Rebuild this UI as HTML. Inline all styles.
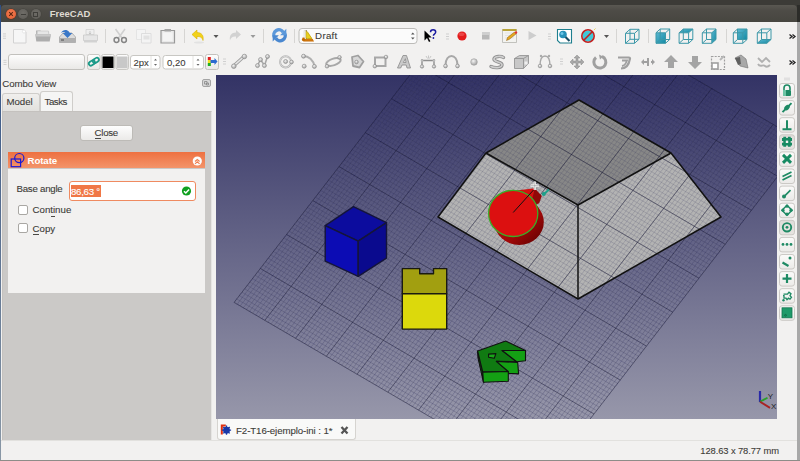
<!DOCTYPE html>
<html><head><meta charset="utf-8">
<style>
*{box-sizing:border-box}
html,body{margin:0;padding:0}
body{width:800px;height:461px;overflow:hidden;position:relative;background:#3c3b37;font-family:"Liberation Sans",sans-serif;font-size:10px;color:#3c3b37;line-height:1;-webkit-text-stroke:0.1px currentColor}
.a{position:absolute}
svg{overflow:hidden}
</style></head><body>
<div class="a" style="left:0;top:5px;width:1px;height:456px;background:linear-gradient(#2d4f86,#5a7090 50%,#8a98a6)"></div>
<div class="a" style="left:797px;top:5px;width:3px;height:17px;background:#2c2c29"></div><div class="a" style="left:797px;top:22px;width:3px;height:439px;background:#a8a8a8"></div>
<div class="a" style="left:1px;top:5px;width:796px;height:18px;background:linear-gradient(#5a5852,#4e4c47 30%,#46453f);border-radius:4px 4px 0 0">
  <div class="a" style="left:4.7px;top:4px;width:10px;height:10px;border-radius:50%;background:radial-gradient(circle at 50% 40%,#f47e55,#e05a2c);box-shadow:0 0 0 .5px #5a3020"></div>
  <svg class="a" style="left:4.7px;top:4px" width="10" height="10" viewBox="0 0 10 10"><path d="M3.2 3.2l3.6 3.6M6.8 3.2l-3.6 3.6" stroke="#5a2510" stroke-width="1.1"/></svg>
  <div class="a" style="left:17px;top:4px;width:10px;height:10px;border-radius:50%;background:radial-gradient(circle at 50% 40%,#6f6d68,#5b5954);box-shadow:0 0 0 .6px #44433f"></div>
  <div class="a" style="left:19.5px;top:8.5px;width:5px;height:1.2px;background:#3f3e3a"></div>
  <div class="a" style="left:29.5px;top:4px;width:10px;height:10px;border-radius:50%;background:radial-gradient(circle at 50% 40%,#6f6d68,#5b5954);box-shadow:0 0 0 .6px #44433f"></div>
  <div class="a" style="left:32px;top:6.5px;width:5px;height:5px;border:1px solid #3f3e3a"></div>
  <div class="a" style="left:48.75px;top:4.46px;font-weight:bold;font-size:9.5px;color:#dfdbd2;-webkit-text-stroke:0">FreeCAD</div>
</div>
<div class="a" style="left:1px;top:22px;width:796px;height:438px;background:#f2f1f0"></div>
<!-- toolbar 1 -->
<svg class="a" style="left:0;top:22px" width="800" height="27" viewBox="0 22 800 27">
<g stroke="#c8c8c8" stroke-width=".8"><path d="M3 33.9h3M3 36.1h3M3 38.3h3"/></g>
<g stroke="#d6d5d3" stroke-width="1"><path d="M105.5 29v14M184.5 29v14M263.5 29v14M294.5 29v14M616.5 29v14M648.5 29v14M726.5 29v14"/></g>
<!-- new -->
<path d="M13.5 29.5h10l2.5 2.5v11h-12.5z" fill="#f6f6f6" stroke="#d2d2d2"/>
<circle cx="24" cy="31.5" r="1.6" fill="#fff" stroke="#d8d8d8" stroke-width=".6"/>
<!-- open -->
<path d="M36 30.5h4.5l1 1.2h7.5v3h-13z" fill="#b4b4b4"/>
<path d="M37.5 31h11l.5 4h-12z" fill="#e6e6e6" stroke="#c4c4c4" stroke-width=".6"/>
<path d="M35.3 34.2h15.7l-1.3 7.3h-13.4z" fill="#adadad"/>
<path d="M35.3 34.2h15.7l-.4 2.2h-15z" fill="#c9c9c9"/>
<!-- save -->
<path d="M59.5 37l3.5-4h9l3.5 4v5.5h-16z" fill="#dcdcdc" stroke="#a4a4a4" stroke-width=".8"/>
<path d="M59.5 38h16v4.5h-16z" fill="#b0b0b0"/>
<path d="M61 40h3" stroke="#444" stroke-width=".9"/>
<path d="M61 33c1.5-3.5 6-4 8-1.2l.8 1.2h2.5l-4.8 5-4.8-5h2.6c-.8-1.2-2.8-1.2-4.3 0z" fill="#3a78c8"/>
<!-- print -->
<path d="M86 29.5h8v5h-8z" fill="#efefef" stroke="#cfcfcf" stroke-width=".7"/>
<path d="M83.5 35h14v5.5h-14z" fill="#e6e6e6" stroke="#c6c6c6" stroke-width=".7"/>
<path d="M84 40.5h13v2h-13z" fill="#d2d2d2"/>
<path d="M90 31v3M88.8 33l1.2 1 1.2-1" stroke="#b9b9b9" stroke-width=".7" fill="none"/>
<!-- cut -->
<path d="M115.5 29l6.5 9M125 29l-6.5 9" stroke="#d0d0d0" stroke-width="1.6"/>
<circle cx="116.5" cy="40" r="2.4" fill="none" stroke="#858585" stroke-width="1.5"/>
<circle cx="124" cy="40" r="2.4" fill="none" stroke="#858585" stroke-width="1.5"/>
<!-- copy -->
<path d="M136.5 29.5h9v10h-9z" fill="#f4f4f4" stroke="#e0e0e0" stroke-width=".8"/>
<path d="M141.5 33.5h9.5v9.5h-9.5z" fill="#f4f4f4" stroke="#d8d8d8" stroke-width=".8"/>
<path d="M143.5 35.5h6v4h-6z" fill="#e2e2e2"/>
<!-- paste -->
<path d="M161 30.5h13.5v12.5h-13.5z" fill="#e9e9e9" stroke="#999" stroke-width="1.2"/>
<path d="M164.5 29h6.5v2.5h-6.5z" fill="#a5a5a5"/>
<path d="M163 32.5h9.5v8.5h-9.5z" fill="#f4f4f4"/>
<!-- undo -->
<path d="M197 30l-5 4.5 5 4.5v-2.5c3 0 5 .5 6 4 1-5-1.5-8-6-8z" fill="#f2d21a" stroke="#d9b000" stroke-width=".6"/>
<ellipse cx="199" cy="42.5" rx="5" ry="1" fill="#e2e2e2"/>
<path d="M213.5 35h5l-2.5 3z" fill="#555"/>
<!-- redo -->
<path d="M236 30l5 4.5-5 4.5v-2.5c-3 0-5 .5-6 4-1-5 1.5-8 6-8z" fill="#d2d2d2"/>
<path d="M250.5 35h5l-2.5 3z" fill="#9a9a9a"/>
<!-- refresh -->
<path d="M274.5 37.5a5 5 0 0 1 8.8-5.2" fill="none" stroke="#5b98da" stroke-width="3.4"/>
<path d="M284.5 33a5 5 0 0 1-8.8 5.2" fill="none" stroke="#4a88d0" stroke-width="3.4"/>
<path d="M286.3 28.8v6.4h-6.2z" fill="#5b98da"/>
<path d="M272.7 41.6v-6.4h6.2z" fill="#4a88d0"/>
<!-- combobox -->
<rect x="299" y="28.5" width="118" height="15" rx="3" fill="#fbfbfb" stroke="#bdbcb9"/>
<path d="M303 41.5h11l-1-2h-8z" fill="#c96a00"/>
<path d="M305.5 31l1.5-1v10h-1.5z" fill="#555"/>
<path d="M307.5 31l5 8.5h-5z" fill="#e8c21a"/>
<path d="M411 34.5l1.8-2 1.8 2zM411 37.5l1.8 2 1.8-2z" fill="#555"/>
<!-- whats this -->
<path d="M424.5 30.5v10l2.5-2.5 2 4 1.4-.7-2-3.8h3.3z" fill="#000"/>
<path d="M430.5 32.2c0-1.6 1.2-2.4 2.6-2.4 1.5 0 2.6.9 2.6 2.3 0 2-2.3 2-2.3 3.6" fill="none" stroke="#1a1aa0" stroke-width="1.5"/>
<circle cx="433.4" cy="38" r=".9" fill="#1a1aa0"/>
<g stroke="#cfcfcf"><path d="M446 34h3M446 36.5h3M446 39h3"/></g>
<circle cx="462" cy="36" r="4.6" fill="#e31c1c"/>
<ellipse cx="461.5" cy="34.3" rx="3" ry="1.8" fill="#f26060" opacity=".6"/>
<!-- stop -->
<rect x="482" y="32" width="7.5" height="7.5" fill="#b8b8b8"/>
<rect x="482" y="32" width="7.5" height="3" fill="#cfcfcf"/>
<!-- macro edit -->
<path d="M502.5 29.5h14v13h-14z" fill="#f3f3f0" stroke="#b5b5b0" stroke-width=".8"/>
<path d="M502.5 29h14v2h-14z" fill="#b8a43a"/>
<path d="M505 33h9M505 35.5h9M505 38h9" stroke="#dcdcdc" stroke-width=".6"/>
<path d="M506.5 40.5l1-3 7-5.5 1.7 1.8-6.8 5.5z" fill="#e4a820" stroke="#8a5a10" stroke-width=".5"/>
<circle cx="516" cy="32.5" r="1.2" fill="#e23030"/>
<path d="M528.5 31v9l8-4.5z" fill="#cdcdcd"/>
<g stroke="#cfcfcf"><path d="M548 34h3M548 36.5h3M548 39h3"/></g>
<!-- zoom doc -->
<path d="M557.5 29.5h14v13.5h-11.5l-2.5-2.5z" fill="#fff" stroke="#1e7f8e" stroke-width="1.1"/>
<circle cx="563" cy="34.5" r="3.8" fill="#2791b8"/>
<circle cx="562" cy="33.5" r="1.5" fill="#6cc5e8"/>
<path d="M565.5 37l4 4" stroke="#1a4f66" stroke-width="2.2"/>
<!-- no entry -->
<circle cx="588" cy="36" r="5.6" fill="#40c8d8"/>
<circle cx="588" cy="36" r="6.2" fill="none" stroke="#c02020" stroke-width="1.6"/>
<path d="M583.5 40.5l9-9" stroke="#c02020" stroke-width="1.6"/>
<path d="M594 30l1.5-1.5" stroke="#e8d060" stroke-width="1"/>
<path d="M604 35h5l-2.5 3z" fill="#555"/>

<defs><linearGradient id="cg" x1="0" y1="0" x2="1" y2="1"><stop offset="0" stop-color="#5cb8d2"/><stop offset="1" stop-color="#138aa3"/></linearGradient></defs>
<path d="M625.5 33.3L634.5 33.3M630.0 29.3L639.0 29.3M625.5 33.3L630.0 29.3M634.5 33.3L634.5 43.3M639.0 29.3L639.0 39.3M634.5 33.3L639.0 29.3M634.5 43.3L625.5 43.3M639.0 39.3L630.0 39.3M634.5 43.3L639.0 39.3M625.5 43.3L625.5 33.3M630.0 39.3L630.0 29.3M625.5 43.3L630.0 39.3" stroke="#3d98a8" stroke-width="1" fill="none"/>
<polygon points="656.0,32.8 665.5,32.8 665.5,43.3 656.0,43.3" fill="url(#cg)"/>
<path d="M656.0 32.8L665.5 32.8M660.2 29.0L669.7 29.0M656.0 32.8L660.2 29.0M665.5 32.8L665.5 43.3M669.7 29.0L669.7 39.5M665.5 32.8L669.7 29.0M665.5 43.3L656.0 43.3M669.7 39.5L660.2 39.5M665.5 43.3L669.7 39.5M656.0 43.3L656.0 32.8M660.2 39.5L660.2 29.0M656.0 43.3L660.2 39.5" stroke="#3d98a8" stroke-width="1" fill="none"/>
<polygon points="679.1,32.8 688.6,32.8 692.8,29.0 683.3,29.0" fill="url(#cg)"/>
<path d="M679.1 32.8L688.6 32.8M683.3 29.0L692.8 29.0M679.1 32.8L683.3 29.0M688.6 32.8L688.6 43.3M692.8 29.0L692.8 39.5M688.6 32.8L692.8 29.0M688.6 43.3L679.1 43.3M692.8 39.5L683.3 39.5M688.6 43.3L692.8 39.5M679.1 43.3L679.1 32.8M683.3 39.5L683.3 29.0M679.1 43.3L683.3 39.5" stroke="#3d98a8" stroke-width="1" fill="none"/>
<polygon points="711.8,32.8 716.0,29.0 716.0,39.5 711.8,43.3" fill="url(#cg)"/>
<path d="M702.3 32.8L711.8 32.8M706.5 29.0L716.0 29.0M702.3 32.8L706.5 29.0M711.8 32.8L711.8 43.3M716.0 29.0L716.0 39.5M711.8 32.8L716.0 29.0M711.8 43.3L702.3 43.3M716.0 39.5L706.5 39.5M711.8 43.3L716.0 39.5M702.3 43.3L702.3 32.8M706.5 39.5L706.5 29.0M702.3 43.3L706.5 39.5" stroke="#3d98a8" stroke-width="1" fill="none"/>
<polygon points="737.5,29.0 747.0,29.0 747.0,39.5 737.5,39.5" fill="url(#cg)"/>
<path d="M733.3 32.8L742.8 32.8M737.5 29.0L747.0 29.0M733.3 32.8L737.5 29.0M742.8 32.8L742.8 43.3M747.0 29.0L747.0 39.5M742.8 32.8L747.0 29.0M742.8 43.3L733.3 43.3M747.0 39.5L737.5 39.5M742.8 43.3L747.0 39.5M733.3 43.3L733.3 32.8M737.5 39.5L737.5 29.0M733.3 43.3L737.5 39.5" stroke="#3d98a8" stroke-width="1" fill="none"/>
<polygon points="757.3,43.3 766.8,43.3 771.0,39.5 761.5,39.5" fill="url(#cg)"/>
<path d="M757.3 32.8L766.8 32.8M761.5 29.0L771.0 29.0M757.3 32.8L761.5 29.0M766.8 32.8L766.8 43.3M771.0 29.0L771.0 39.5M766.8 32.8L771.0 29.0M766.8 43.3L757.3 43.3M771.0 39.5L761.5 39.5M766.8 43.3L771.0 39.5M757.3 43.3L757.3 32.8M761.5 39.5L761.5 29.0M757.3 43.3L761.5 39.5" stroke="#3d98a8" stroke-width="1" fill="none"/>
<path d="M789.5 34.5l2.5 2-2.5 2M792.5 34.5l2.5 2-2.5 2" fill="none" stroke="#222" stroke-width="1.3"/>
</svg>
<!-- toolbar 2 -->
<svg class="a" style="left:0;top:49px" width="800" height="26" viewBox="0 49 800 26">
<defs>
<linearGradient id="btn" x1="0" y1="0" x2="0" y2="1"><stop offset="0" stop-color="#fdfdfd"/><stop offset="1" stop-color="#e9e8e6"/></linearGradient>
<radialGradient id="dot" cx=".4" cy=".35" r=".7"><stop offset="0" stop-color="#f4f4f4"/><stop offset="1" stop-color="#9a9a9a"/></radialGradient>
</defs>
<g stroke="#c8c8c8" stroke-width=".8"><path d="M3.5 60.3h3M3.5 62.4h3M3.5 64.5h3"/></g>
<rect x="8.5" y="54.5" width="76" height="15" rx="2.5" fill="url(#btn)" stroke="#c2c1bd"/>
<rect x="87.5" y="54.5" width="12.5" height="15" rx="2" fill="url(#btn)" stroke="#c9c8c4"/>
<rect x="88.6" y="61" width="6.5" height="4" rx="2" transform="rotate(-35 91.8 63)" fill="none" stroke="#1a9a88" stroke-width="1.8"/>
<rect x="92.6" y="58.5" width="6.5" height="4" rx="2" transform="rotate(-35 95.8 60.5)" fill="none" stroke="#1a9a88" stroke-width="1.8"/>
<rect x="101.5" y="54.5" width="13" height="15" rx="2" fill="url(#btn)" stroke="#c9c8c4"/>
<rect x="102.5" y="56.5" width="11" height="11.5" fill="#000"/>
<rect x="116" y="54.5" width="12.5" height="15" rx="2" fill="url(#btn)" stroke="#c9c8c4"/>
<rect x="117" y="56.5" width="10.5" height="11.5" fill="#c8c8c8"/>
<rect x="130.5" y="55.5" width="29.5" height="13.5" rx="2.5" fill="#fff" stroke="#c8c7c3"/>
<path d="M151 56v12.5" stroke="#e4e3e0"/>
<path d="M154 60.5l1.5-1.8 1.5 1.8zM154 64l1.5 1.8 1.5-1.8z" fill="#666"/>
<rect x="163" y="55.5" width="40.5" height="13.5" rx="2.5" fill="#fff" stroke="#c8c7c3"/>
<path d="M193 56v12.5" stroke="#e4e3e0"/>
<path d="M196.5 60.5l1.5-1.8 1.5 1.8zM196.5 64l1.5 1.8 1.5-1.8z" fill="#666"/>
<rect x="205.5" y="54.5" width="13" height="15" rx="2" fill="url(#btn)" stroke="#c2c1bd"/>
<rect x="207.8" y="57" width="3" height="3" fill="#e02020"/>
<rect x="207.8" y="60" width="3" height="3" fill="#f0e020"/>
<rect x="207.8" y="63" width="3" height="3" fill="#20b020"/>
<path d="M210.5 60h4v-2l3 3.5-3 3.5v-2h-4z" fill="#2a6ad0"/>
<g stroke="#d0d0d0"><path d="M223 59h3M223 61.5h3M223 64h3"/></g>
<!-- line -->
<path d="M233.5 66l10.5-9.5" stroke="#a0a0a0" stroke-width="3.2" stroke-linecap="round"/>
<path d="M233.5 66l10.5-9.5" stroke="#e6e6e6" stroke-width="1.6" stroke-linecap="round"/>
<circle cx="233.8" cy="66.2" r="2.3" fill="url(#dot)" stroke="#8a8a8a" stroke-width=".6"/>
<circle cx="244.4" cy="56.5" r="2.3" fill="url(#dot)" stroke="#8a8a8a" stroke-width=".6"/>
<!-- wire -->
<path d="M257.5 65.5l3-6 4 6 3-9" fill="none" stroke="#a8a8a8" stroke-width="1.6"/>
<circle cx="257.5" cy="65.6" r="2" fill="url(#dot)" stroke="#8a8a8a" stroke-width=".6"/>
<circle cx="260.5" cy="59.6" r="2" fill="url(#dot)" stroke="#8a8a8a" stroke-width=".6"/>
<circle cx="264.4" cy="65.6" r="2" fill="url(#dot)" stroke="#8a8a8a" stroke-width=".6"/>
<circle cx="267.5" cy="56.5" r="2" fill="url(#dot)" stroke="#8a8a8a" stroke-width=".6"/>
<!-- circle -->
<circle cx="285.6" cy="61.8" r="5.6" fill="none" stroke="#b0b0b0" stroke-width="2"/>
<circle cx="285.6" cy="61.8" r="5.6" fill="none" stroke="#e8e8e8" stroke-width=".7"/>
<circle cx="285.6" cy="61.5" r="2" fill="url(#dot)" stroke="#8a8a8a" stroke-width=".6"/>
<circle cx="291.5" cy="62" r="1.9" fill="url(#dot)" stroke="#8a8a8a" stroke-width=".6"/>
<!-- arc -->
<path d="M303.5 56c5 0 10 4 11 10.5" fill="none" stroke="#b0b0b0" stroke-width="2"/>
<circle cx="303.5" cy="56.2" r="2" fill="url(#dot)" stroke="#8a8a8a" stroke-width=".6"/>
<circle cx="304.2" cy="66.2" r="2" fill="url(#dot)" stroke="#8a8a8a" stroke-width=".6"/>
<circle cx="314.4" cy="66.4" r="2" fill="url(#dot)" stroke="#8a8a8a" stroke-width=".6"/>
<!-- ellipse -->
<ellipse cx="333.5" cy="62" rx="7.5" ry="3.3" transform="rotate(-18 333.5 62)" fill="none" stroke="#a8a8a8" stroke-width="2"/>
<circle cx="327" cy="66.3" r="1.8" fill="url(#dot)" stroke="#8a8a8a" stroke-width=".6"/>
<circle cx="339.5" cy="57.3" r="1.8" fill="url(#dot)" stroke="#8a8a8a" stroke-width=".6"/>
<!-- polygon -->
<path d="M352 57l6-1.5 5.5 6-4 6-6.5-1.5z" fill="#d8d8d8" stroke="#a0a0a0" stroke-width="1.8" stroke-linejoin="round"/>
<circle cx="356.5" cy="62" r="1.8" fill="url(#dot)" stroke="#8a8a8a" stroke-width=".6"/>
<!-- rect -->
<rect x="375" y="57.5" width="10.5" height="8.5" fill="none" stroke="#a8a8a8" stroke-width="2"/>
<circle cx="374.8" cy="66.2" r="1.8" fill="url(#dot)" stroke="#8a8a8a" stroke-width=".6"/>
<circle cx="386" cy="57" r="1.8" fill="url(#dot)" stroke="#8a8a8a" stroke-width=".6"/>
<!-- text A -->
<path d="M397.5 68l5.5-12.5h3.5l4 12.5h-3.5l-.8-3h-4.2l-1.3 3zM403.3 62.5h2.7l-.6-3.8z" fill="#c9c9c9" stroke="#8a8a8a" stroke-width=".8" fill-rule="evenodd"/>
<!-- dimension -->
<path d="M422 60.5h12M422 59v8M434 59v8" stroke="#8e8e8e" stroke-width="1.4"/>
<path d="M426 56l1.5 2.5M428.5 55.5v3M431 56l-1.5 2.5" stroke="#b5b5b5" stroke-width=".7"/>
<circle cx="422" cy="66.5" r="1.7" fill="url(#dot)" stroke="#8a8a8a" stroke-width=".6"/>
<circle cx="434" cy="66.5" r="1.7" fill="url(#dot)" stroke="#8a8a8a" stroke-width=".6"/>
<circle cx="422" cy="60.5" r="1.3" fill="#bbb"/><circle cx="434" cy="60.5" r="1.3" fill="#bbb"/>
<!-- arc3 -->
<path d="M445.5 65c0-6 3-9 6-9s6 3 6 9" fill="none" stroke="#a8a8a8" stroke-width="2"/>
<circle cx="445.5" cy="66" r="1.9" fill="url(#dot)" stroke="#8a8a8a" stroke-width=".6"/>
<circle cx="457.5" cy="66" r="1.9" fill="url(#dot)" stroke="#8a8a8a" stroke-width=".6"/>
<!-- point -->
<circle cx="474" cy="62" r="3.3" fill="url(#dot)" stroke="#a0a0a0" stroke-width=".6"/>
<!-- bspline S -->
<path d="M503.5 57.5c-2-1.5-9-1.8-9.5 1.5s8.5 2.5 8 6-8 3-11 1.5" fill="none" stroke="#8e8e8e" stroke-width="3.4" stroke-linecap="round"/>
<path d="M503.5 57.5c-2-1.5-9-1.8-9.5 1.5s8.5 2.5 8 6-8 3-11 1.5" fill="none" stroke="#cfcfcf" stroke-width="1.6" stroke-linecap="round"/>
<!-- facebinder -->
<path d="M514.5 58.5l5-3h9v8l-5 5h-9z" fill="#c8c8c8" stroke="#8e8e8e" stroke-width=".8"/>
<path d="M514.5 58.5h9v10" fill="none" stroke="#8e8e8e" stroke-width=".8"/>
<path d="M523.5 58.5l5-3" stroke="#8e8e8e" stroke-width=".8"/>
<path d="M524.5 61.5h3v3h-3z" fill="#eee"/>
<!-- bezier -->
<path d="M540 66c0-7 2-10 5-10s5 3 5 10" fill="none" stroke="#a8a8a8" stroke-width="1.4"/>
<circle cx="540" cy="66" r="1.8" fill="url(#dot)" stroke="#8a8a8a" stroke-width=".6"/>
<circle cx="550" cy="66" r="1.8" fill="url(#dot)" stroke="#8a8a8a" stroke-width=".6"/>
<circle cx="541" cy="56" r="1.2" fill="#aaa"/><circle cx="549" cy="56" r="1.2" fill="#aaa"/>
<g stroke="#d0d0d0"><path d="M560 59h3M560 61.5h3M560 64h3"/></g>
<!-- move -->
<path d="M577 55l3 3h-2v3h3v-2l3 3-3 3v-2h-3v3h2l-3 3-3-3h2v-3h-3v2l-3-3 3-3v2h3v-3h-2z" fill="#a8a8a8" stroke="#8a8a8a" stroke-width=".5"/>
<!-- rotate -->
<path d="M596 57.5a6 6 0 1 0 6-1" fill="none" stroke="#a0a0a0" stroke-width="3"/>
<path d="M599 54.5l4 2-3 3z" fill="#a0a0a0"/>
<!-- offset -->
<path d="M618 57.5h11c1 0 1 1 1 1-1 6-4 10-9 10" fill="none" stroke="#a0a0a0" stroke-width="2.2"/>
<path d="M622 60.5h5c-1 3-2 5-5 5.5" fill="none" stroke="#a0a0a0" stroke-width="1.8"/>
<!-- trimex -->
<path d="M641 62l3-3v2h3v-3h2v8h-2v-3h-3v2zM655 62l-3-3v2h-1v2h1v2z" fill="#a0a0a0"/>
<!-- upgrade -->
<path d="M671 55l7 7h-4v6h-6v-6h-4z" fill="#a4a4a4"/>
<!-- downgrade -->
<path d="M695 69l7-7h-4v-6h-6v6h-4z" fill="#a4a4a4"/>
<!-- scale -->
<path d="M711.5 56.5h13v13h-13z" fill="none" stroke="#a0a0a0" stroke-width="1.2" stroke-dasharray="2 1.2"/>
<rect x="712" y="63" width="6" height="6" fill="#fff" stroke="#a0a0a0" stroke-width="1.6"/>
<path d="M720 60l4-4" stroke="#b8b8b8" stroke-width="2"/>
<!-- drawing -->
<path d="M735 58l6-3 5 4 2 9-8-2z" fill="#a8a8a8" stroke="#707070" stroke-width=".6"/>
<path d="M735 58l5-1 1 7-3 1z" fill="#606060"/>
<!-- wire2bspline -->
<path d="M758 58l4 4 4-4 4 4M758 64c2 4 5 0 7 2s4 0 5-1" fill="none" stroke="#b0b0b0" stroke-width="1.8"/>
<path d="M789.5 60.5l2.5 2-2.5 2M792.5 60.5l2.5 2-2.5 2" fill="none" stroke="#222" stroke-width="1.3"/>
</svg>

<div class="a" style="left:315.1px;top:30.9px;font-size:9.7px;letter-spacing:.3px">Draft</div>
<svg class="a" style="left:301px;top:29px" width="14" height="13" viewBox="0 0 14 13"><path d="M3 1.5h2v9h-2z" fill="#f4f4f0" stroke="#d0d0c8" stroke-width=".5"/><path d="M5 1.5l6 8h-6z" fill="#e8d020" stroke="#b09010" stroke-width=".5"/><path d="M1.5 8.5h2v1.5h8.5v1.8h-10.5z" fill="#d07810"/><circle cx="2.5" cy="10.5" r="1.6" fill="#c06a00"/></svg>
<div class="a" style="left:133.5px;top:57.9px;font-size:9.5px">2px</div>
<div class="a" style="left:167px;top:57.9px;font-size:9.5px">0,20</div>
<!-- combo view -->
<div class="a" style="left:2.25px;top:78.7px;font-size:9.7px;letter-spacing:-.08px">Combo View</div>
<svg class="a" style="left:201px;top:78px" width="11" height="10" viewBox="0 0 11 10"><rect x="1.5" y="1.5" width="8" height="7" rx="1.5" fill="#d8d8d8" stroke="#a4a4a4"/><path d="M3.5 3.5h2.5v2.5h-2.5zM5.5 5h2v2h-2z" fill="none" stroke="#888" stroke-width=".8"/></svg>
<div class="a" style="left:2px;top:110.5px;width:210px;height:330px;background:#cbc9c7;border:1px solid #c4c1be;border-right-color:#e6e5e3"></div>
<div class="a" style="left:1.5px;top:93px;width:38px;height:17.5px;background:linear-gradient(#f0efed,#e2e1de);border:1px solid #cfcdca;border-bottom:none;border-radius:3px 3px 0 0"></div>
<div class="a" style="left:6.4px;top:96.7px;font-size:9.7px">Model</div>
<div class="a" style="left:39.5px;top:91.4px;width:33px;height:20px;background:#f5f5f4;border:1px solid #cfcdca;border-bottom:none;border-radius:3px 3px 0 0"></div>
<div class="a" style="left:44.5px;top:96.7px;font-size:9.7px;letter-spacing:-.45px">Tasks</div>
<!-- close button -->
<div class="a" style="left:80px;top:125px;width:52.6px;height:15.5px;background:linear-gradient(#fdfdfd,#ebeae8);border:1px solid #bdbbb7;border-radius:3px"></div>
<div class="a" style="left:94.6px;top:127.8px;font-size:9.7px;letter-spacing:-.28px">Close</div>
<div class="a" style="left:94.6px;top:137.8px;width:6.2px;height:1px;background:#4a4945"></div>
<!-- task box -->
<div class="a" style="left:8px;top:152.2px;width:196.5px;height:16.3px;background:linear-gradient(#ee7040,#f3946a)"></div>
<svg class="a" style="left:9px;top:152px" width="16" height="17" viewBox="0 0 16 17"><rect x="2.2" y="7" width="9.4" height="7.7" fill="none" stroke="#1818d8" stroke-width="1.2"/><circle cx="10.3" cy="6.1" r="4.6" fill="none" stroke="#1818d8" stroke-width="1.2"/></svg>
<div class="a" style="left:27.5px;top:155.7px;font-size:9.7px;font-weight:bold;color:#fff;letter-spacing:-.1px;-webkit-text-stroke:0">Rotate</div>
<svg class="a" style="left:192px;top:156px" width="11" height="11" viewBox="0 0 11 11"><circle cx="5.3" cy="5" r="4.6" fill="#fdfdfd"/><path d="M3 5.5l2.3-2 2.3 2M3 7.8l2.3-2 2.3 2" fill="none" stroke="#f08050" stroke-width="1.1"/></svg>
<div class="a" style="left:8px;top:168.5px;width:196.8px;height:124.7px;background:#f2f1f0"></div>
<div class="a" style="left:16.5px;top:183.7px;font-size:9.7px;letter-spacing:-.25px">Base angle</div>
<div class="a" style="left:68.5px;top:181.4px;width:127px;height:19.4px;background:#fff;border:1.2px solid #ef8a60;border-radius:3px"></div>
<div class="a" style="left:70.8px;top:185px;width:29.8px;height:12px;background:#f07746"></div>
<div class="a" style="left:71px;top:186.6px;font-size:9.7px;color:#fff;letter-spacing:-.3px">86,63 °</div>
<svg class="a" style="left:181px;top:186px" width="11" height="11" viewBox="0 0 11 11"><circle cx="5.5" cy="5" r="4.6" fill="#10a020"/><path d="M3 5.2l1.8 1.8 3.3-3.5" fill="none" stroke="#fff" stroke-width="1.5"/></svg>
<div class="a" style="left:18px;top:205px;width:9.8px;height:9.8px;background:#fff;border:1px solid #a9a7a3;border-radius:2px"></div>
<div class="a" style="left:32.5px;top:205px;font-size:9.7px">Continue</div>
<div class="a" style="left:51px;top:216px;width:3.5px;height:1px;background:#4a4945"></div>
<div class="a" style="left:18px;top:223px;width:9.8px;height:9.8px;background:#fff;border:1px solid #a9a7a3;border-radius:2px"></div>
<div class="a" style="left:32.5px;top:223.6px;font-size:9.7px">Copy</div>
<div class="a" style="left:33px;top:233.5px;width:6px;height:1px;background:#4a4945"></div>
<!-- tab bar -->
<div class="a" style="left:216.5px;top:419px;width:139px;height:21px;background:#f9f9f8;border:1px solid #d6d4d0;border-top:none;border-radius:0 0 3px 3px"></div>
<svg class="a" style="left:219px;top:423px" width="14" height="14" viewBox="0 0 14 14"><path d="M1.8 1.5h5v2h-3v8h-2z" fill="#e03010"/><circle cx="7.5" cy="7.2" r="3.4" fill="#1838a8"/><circle cx="7.5" cy="7.2" r="1.2" fill="#fff"/><path d="M7.5 2.6v9.2M2.9 7.2h9.2M4.3 4l6.4 6.4M10.7 4l-6.4 6.4" stroke="#1838a8" stroke-width="1.3"/></svg>
<div class="a" style="left:236px;top:425.5px;font-size:9.7px;letter-spacing:-.09px">F2-T16-ejemplo-ini : 1*</div>
<svg class="a" style="left:339px;top:425px" width="11" height="11" viewBox="0 0 11 11"><path d="M2.5 2l6 6.5M8.5 2l-6 6.5" stroke="#555" stroke-width="2.3"/></svg>
<!-- status bar -->
<div class="a" style="left:1px;top:440px;width:796px;height:1px;background:#e2e1de"></div>
<div class="a" style="left:700.3px;top:446.3px;font-size:9.4px;letter-spacing:-.1px">128.63 x 78.77 mm</div>
<div class="a" style="left:0;top:460px;width:800px;height:1px;background:#8e8c88"></div>

<svg class="a" style="left:216px;top:75px" width="561" height="344" viewBox="216 75 561 344">
<defs>
<linearGradient id="bg" x1="0" y1="0" x2="0" y2="1">
<stop offset="0" stop-color="#333365"/><stop offset="1" stop-color="#9797aa"/>
</linearGradient>
<linearGradient id="cyl" x1="0" y1="0" x2="1" y2="1">
<stop offset="0" stop-color="#c01010"/><stop offset=".6" stop-color="#a00808"/><stop offset="1" stop-color="#580000"/>
</linearGradient>
<filter id="soft" x="216" y="75" width="561" height="344" filterUnits="userSpaceOnUse"><feGaussianBlur stdDeviation="0.45"/></filter>
<clipPath id="fr"><polygon points="579,100 671,153 721,217 578,299 438,217 486,153"/></clipPath>
</defs>
<rect x="216" y="75" width="561" height="344" fill="url(#bg)"/>
<polygon points="579,100 671,153 578,205 486,153" fill="#878787"/>
<polygon points="486,153 578,205 578,299 438,217" fill="#b3b3b3"/>
<polygon points="578,205 671,153 721,217 578,299" fill="#b3b3b3"/>
<g filter="url(#soft)"><g transform="matrix(30.74,17.95,26.24,-33.95,234.1,302.4)" fill="none">
<path d="M0.1 0V10M0 0.1H10M0.2 0V10M0 0.2H10M0.3 0V10M0 0.3H10M0.4 0V10M0 0.4H10M0.5 0V10M0 0.5H10M0.6 0V10M0 0.6H10M0.7 0V10M0 0.7H10M0.8 0V10M0 0.8H10M0.9 0V10M0 0.9H10M1.1 0V10M0 1.1H10M1.2 0V10M0 1.2H10M1.3 0V10M0 1.3H10M1.4 0V10M0 1.4H10M1.5 0V10M0 1.5H10M1.6 0V10M0 1.6H10M1.7 0V10M0 1.7H10M1.8 0V10M0 1.8H10M1.9 0V10M0 1.9H10M2.1 0V10M0 2.1H10M2.2 0V10M0 2.2H10M2.3 0V10M0 2.3H10M2.4 0V10M0 2.4H10M2.5 0V10M0 2.5H10M2.6 0V10M0 2.6H10M2.7 0V10M0 2.7H10M2.8 0V10M0 2.8H10M2.9 0V10M0 2.9H10M3.1 0V10M0 3.1H10M3.2 0V10M0 3.2H10M3.3 0V10M0 3.3H10M3.4 0V10M0 3.4H10M3.5 0V10M0 3.5H10M3.6 0V10M0 3.6H10M3.7 0V10M0 3.7H10M3.8 0V10M0 3.8H10M3.9 0V10M0 3.9H10M4.1 0V10M0 4.1H10M4.2 0V10M0 4.2H10M4.3 0V10M0 4.3H10M4.4 0V10M0 4.4H10M4.5 0V10M0 4.5H10M4.6 0V10M0 4.6H10M4.7 0V10M0 4.7H10M4.8 0V10M0 4.8H10M4.9 0V10M0 4.9H10M5.1 0V10M0 5.1H10M5.2 0V10M0 5.2H10M5.3 0V10M0 5.3H10M5.4 0V10M0 5.4H10M5.5 0V10M0 5.5H10M5.6 0V10M0 5.6H10M5.7 0V10M0 5.7H10M5.8 0V10M0 5.8H10M5.9 0V10M0 5.9H10M6.1 0V10M0 6.1H10M6.2 0V10M0 6.2H10M6.3 0V10M0 6.3H10M6.4 0V10M0 6.4H10M6.5 0V10M0 6.5H10M6.6 0V10M0 6.6H10M6.7 0V10M0 6.7H10M6.8 0V10M0 6.8H10M6.9 0V10M0 6.9H10M7.1 0V10M0 7.1H10M7.2 0V10M0 7.2H10M7.3 0V10M0 7.3H10M7.4 0V10M0 7.4H10M7.5 0V10M0 7.5H10M7.6 0V10M0 7.6H10M7.7 0V10M0 7.7H10M7.8 0V10M0 7.8H10M7.9 0V10M0 7.9H10M8.1 0V10M0 8.1H10M8.2 0V10M0 8.2H10M8.3 0V10M0 8.3H10M8.4 0V10M0 8.4H10M8.5 0V10M0 8.5H10M8.6 0V10M0 8.6H10M8.7 0V10M0 8.7H10M8.8 0V10M0 8.8H10M8.9 0V10M0 8.9H10M9.1 0V10M0 9.1H10M9.2 0V10M0 9.2H10M9.3 0V10M0 9.3H10M9.4 0V10M0 9.4H10M9.5 0V10M0 9.5H10M9.6 0V10M0 9.6H10M9.7 0V10M0 9.7H10M9.8 0V10M0 9.8H10M9.9 0V10M0 9.9H10" stroke="rgba(44,44,84,0.23)" stroke-width="1" vector-effect="non-scaling-stroke"/>
<path d="M0.0 0V10M0 0.0H10M1.0 0V10M0 1.0H10M2.0 0V10M0 2.0H10M3.0 0V10M0 3.0H10M4.0 0V10M0 4.0H10M5.0 0V10M0 5.0H10M6.0 0V10M0 6.0H10M7.0 0V10M0 7.0H10M8.0 0V10M0 8.0H10M9.0 0V10M0 9.0H10M10.0 0V10M0 10.0H10" stroke="rgba(22,22,52,0.5)" stroke-width="1" vector-effect="non-scaling-stroke"/>
</g></g>
<g opacity="0.3">
<polygon points="579,100 671,153 578,205 486,153" fill="#878787"/>
<polygon points="486,153 578,205 578,299 438,217" fill="#b3b3b3"/>
<polygon points="578,205 671,153 721,217 578,299" fill="#b3b3b3"/>
</g>
<g clip-path="url(#fr)"><g transform="matrix(30.74,17.95,26.24,-33.95,234.1,302.4)" fill="none">
<path d="M0.0 0V10M0 0.0H10M1.0 0V10M0 1.0H10M2.0 0V10M0 2.0H10M3.0 0V10M0 3.0H10M4.0 0V10M0 4.0H10M5.0 0V10M0 5.0H10M6.0 0V10M0 6.0H10M7.0 0V10M0 7.0H10M8.0 0V10M0 8.0H10M9.0 0V10M0 9.0H10M10.0 0V10M0 10.0H10" stroke="rgba(22,22,52,0.3)" stroke-width="1" vector-effect="non-scaling-stroke"/>
</g></g>
<g fill="none" stroke="#111" stroke-width="1.5" stroke-linejoin="round">
<polygon points="579,100 671,153 721,217 578,299 438,217 486,153"/>
<polyline points="486,153 578,205 671,153"/>
<line x1="578" y1="205" x2="578" y2="299"/>
</g>
<!-- blue cube -->
<g stroke="#15153a" stroke-width="1.4" stroke-linejoin="round">
<polygon points="353.5,206.6 386.5,222.6 358.2,241.2 325.2,225.7" fill="#0c0c9e"/>
<polygon points="325.2,225.7 358.2,241.2 358.2,276.4 325.2,261.1" fill="#0c0cb4"/>
<polygon points="358.2,241.2 386.5,222.6 386.5,258.2 358.2,276.4" fill="#0a0a8e"/>
</g>
<!-- yellow -->
<g stroke="#1a1a10" stroke-width="1.4" stroke-linejoin="round">
<polygon points="402.3,268.6 419.7,268.6 419.7,273.8 433.5,273.8 433.5,268.6 446.7,268.6 446.7,293.8 402.3,293.8" fill="#a29f10"/>
<rect x="402.3" y="293.8" width="44.4" height="35.3" fill="#dcd90c"/>
</g>
<!-- green -->
<g stroke="#111" stroke-width="1.1" stroke-linejoin="round">
<polygon points="477.6,351 482.8,372.1 483.4,382.2 478,358" fill="#0a5a0c"/>
<polygon points="477.6,351 505.7,341.1 525.5,350.5 502.1,350.5 516.7,361.7 496.4,361.4 508.3,371.5 482.8,372.1" fill="#107a12"/>
<polygon points="502.1,350.5 525.5,350.5 525.5,360.7 516.7,361.7" fill="#14a014"/>
<polygon points="496.4,361.4 517.7,362.5 518.6,373.9 508.3,373.4 508.3,371.5" fill="#14a014"/>
<polygon points="482.8,372.1 508.3,371.5 508.3,381.2 483.4,382.2" fill="#14a014"/>
<polygon points="488.6,354.1 495.9,353.6 494.3,358.3 488.6,357.3" fill="#18a818"/>
</g>
<!-- red cylinder -->
<g>
<ellipse cx="519.2" cy="222" rx="24.6" ry="23.1" fill="url(#cyl)"/>
<polygon points="532.9,199.7 538.9,208.3 499.5,235.7 493.5,227.1" fill="url(#cyl)"/>
<path d="M534.8 188.2l7 7.8-2.6 7.2-4 1.5-5-5z" fill="#900808"/>
<polygon points="505.3,191.7 534.8,188.2 532,200 512,196" fill="#d41010"/>
<ellipse cx="513.2" cy="213.4" rx="24.6" ry="23.1" fill="#dc1010" stroke="#3aae28" stroke-width="1.3"/>
<line x1="513.2" y1="212.5" x2="533.5" y2="190" stroke="#111" stroke-width="1"/>
</g>
<path d="M534.8 181.5v8.5M530.5 185.7h8.5" stroke="#fff" stroke-width="2.2"/>
<path d="M534.8 181.5v8.5M530.5 185.7h8.5" stroke="#888" stroke-width=".6"/>
<path d="M543.5 194.5l5.5-5" stroke="#1fa08a" stroke-width="2"/><circle cx="543.8" cy="194" r="2" fill="#1fa08a"/>
<!-- axis -->
<path d="M760 402v-11" stroke="#2a2aa8" stroke-width="2.2"/>
<path d="M760 401.7l7.5-4" stroke="#28a028" stroke-width="1.8"/>
<path d="M760 401.7l10 6.2" stroke="#a82424" stroke-width="1.9"/>
<text x="767.8" y="398.8" font-size="8" fill="#222" font-family="Liberation Sans">Y</text>
<text x="771" y="409" font-size="8" fill="#222" font-family="Liberation Sans">X</text>
</svg>

<svg class="a" style="left:777px;top:75px" width="20" height="260" viewBox="777 75 20 260">
<path d="M785 77.5v3M787 77.5v3M789 77.5v3" stroke="#c8c8c8" stroke-width=".8"/>
<rect x="779.5" y="83.5" width="15" height="14.5" rx="2.5" fill="url(#rb)" stroke="#cbc9c5"/>
<g transform="translate(779.5,83.0)"><path d="M4.5 7V5a3 3 0 0 1 6 0v2" fill="none" stroke="#1e8a64" stroke-width="1.6"/><rect x="3.5" y="7" width="8" height="6" rx="1" fill="#1e8a64"/><rect x="3.5" y="7" width="3" height="6" fill="#6cc4a4"/></g>
<rect x="779.5" y="100.6" width="15" height="14.5" rx="2.5" fill="url(#rb)" stroke="#cbc9c5"/>
<g transform="translate(779.5,100.1)"><path d="M3 12L12 3" stroke="#1e8a64" stroke-width="2"/><ellipse cx="7.5" cy="7.5" rx="3.2" ry="2.2" transform="rotate(-45 7.5 7.5)" fill="#1e8a64"/></g>
<rect x="779.5" y="117.7" width="15" height="14.5" rx="2.5" fill="url(#rb)" stroke="#cbc9c5"/>
<g transform="translate(779.5,117.2)"><path d="M7.5 3v8.5M3 12h9" stroke="#1e8a64" stroke-width="2"/></g>
<rect x="779.5" y="134.8" width="15" height="14.5" rx="2.5" fill="url(#rbp)" stroke="#cbc9c5"/>
<g transform="translate(779.5,134.3)"><path d="M5.2 2.5v10M9.8 2.5v10M2.5 5.2h10M2.5 9.8h10" stroke="#168a62" stroke-width="2.8"/><rect x="6.3" y="6.3" width="2.4" height="2.4" fill="#f0f0ee"/></g>
<rect x="779.5" y="151.9" width="15" height="14.5" rx="2.5" fill="url(#rb)" stroke="#cbc9c5"/>
<g transform="translate(779.5,151.4)"><path d="M3.5 3.5l8 8M11.5 3.5l-8 8" stroke="#168a62" stroke-width="2.9"/></g>
<rect x="779.5" y="169.0" width="15" height="14.5" rx="2.5" fill="url(#rb)" stroke="#cbc9c5"/>
<g transform="translate(779.5,168.5)"><path d="M3 8l9-4.5M3 11.5l9-4.5" stroke="#1e8a64" stroke-width="1.8"/></g>
<rect x="779.5" y="186.1" width="15" height="14.5" rx="2.5" fill="url(#rb)" stroke="#cbc9c5"/>
<g transform="translate(779.5,185.6)"><path d="M4 11.5L11 4.5" stroke="#1e8a64" stroke-width="1.6"/><circle cx="4.5" cy="11" r="2" fill="#1e8a64"/></g>
<rect x="779.5" y="203.2" width="15" height="14.5" rx="2.5" fill="url(#rb)" stroke="#cbc9c5"/>
<g transform="translate(779.5,202.7)"><path d="M7.5 2.5l5 5-5 5-5-5z" fill="none" stroke="#1e8a64" stroke-width="1.5"/><circle cx="7.5" cy="3.5" r="1.6" fill="#1e8a64"/><circle cx="7.5" cy="11.5" r="1.6" fill="#1e8a64"/><circle cx="3.5" cy="7.5" r="1.6" fill="#1e8a64"/><circle cx="11.5" cy="7.5" r="1.6" fill="#1e8a64"/></g>
<rect x="779.5" y="220.3" width="15" height="14.5" rx="2.5" fill="url(#rbp)" stroke="#cbc9c5"/>
<g transform="translate(779.5,219.8)"><circle cx="7.5" cy="7.5" r="4.2" fill="none" stroke="#1e8a64" stroke-width="1.9"/><circle cx="7.5" cy="7.5" r="1.4" fill="#1e8a64"/></g>
<rect x="779.5" y="237.4" width="15" height="14.5" rx="2.5" fill="url(#rb)" stroke="#cbc9c5"/>
<g transform="translate(779.5,236.9)"><circle cx="3.5" cy="7.5" r="1.4" fill="#1e8a64"/><circle cx="7.5" cy="7.5" r="1.4" fill="#1e8a64"/><circle cx="11.5" cy="7.5" r="1.4" fill="#1e8a64"/></g>
<rect x="779.5" y="254.5" width="15" height="14.5" rx="2.5" fill="url(#rb)" stroke="#cbc9c5"/>
<g transform="translate(779.5,254.0)"><path d="M3 8.5l6 3.5" stroke="#1e8a64" stroke-width="2.2"/><circle cx="10.5" cy="4" r="1.5" fill="#1e8a64"/></g>
<rect x="779.5" y="271.6" width="15" height="14.5" rx="2.5" fill="url(#rb)" stroke="#cbc9c5"/>
<g transform="translate(779.5,271.1)"><path d="M7.5 3v9M3 7.5h9" stroke="#1e8a64" stroke-width="2.2"/></g>
<rect x="779.5" y="288.7" width="15" height="14.5" rx="2.5" fill="url(#rb)" stroke="#cbc9c5"/>
<g transform="translate(779.5,288.2)"><path d="M4 6h4l1.5-2 2 1.5-1 2 1.5 1.5-1.5 2-1.5-1-1.5 1.5-1-1.5h-2v-2.5h-1" fill="none" stroke="#1e8a64" stroke-width="1.3"/><circle cx="4" cy="12" r="1.2" fill="#1e8a64"/></g>
<rect x="779.5" y="305.8" width="15" height="14.5" rx="2.5" fill="url(#rb)" stroke="#cbc9c5"/>
<g transform="translate(779.5,305.3)"><rect x="2.5" y="2.5" width="10" height="10" fill="#1e9a6a"/><rect x="2.5" y="2.5" width="10" height="10" fill="none" stroke="#137550" stroke-width=".8"/><circle cx="6" cy="10" r=".9" fill="none" stroke="#0a4a30" stroke-width=".5"/></g>
<defs><linearGradient id="rb" x1="0" y1="0" x2="0" y2="1"><stop offset="0" stop-color="#fbfbfa"/><stop offset="1" stop-color="#ebeae8"/></linearGradient><linearGradient id="rbp" x1="0" y1="0" x2="0" y2="1"><stop offset="0" stop-color="#dedcd9"/><stop offset="1" stop-color="#e6e4e1"/></linearGradient></defs>
</svg>
</body></html>
